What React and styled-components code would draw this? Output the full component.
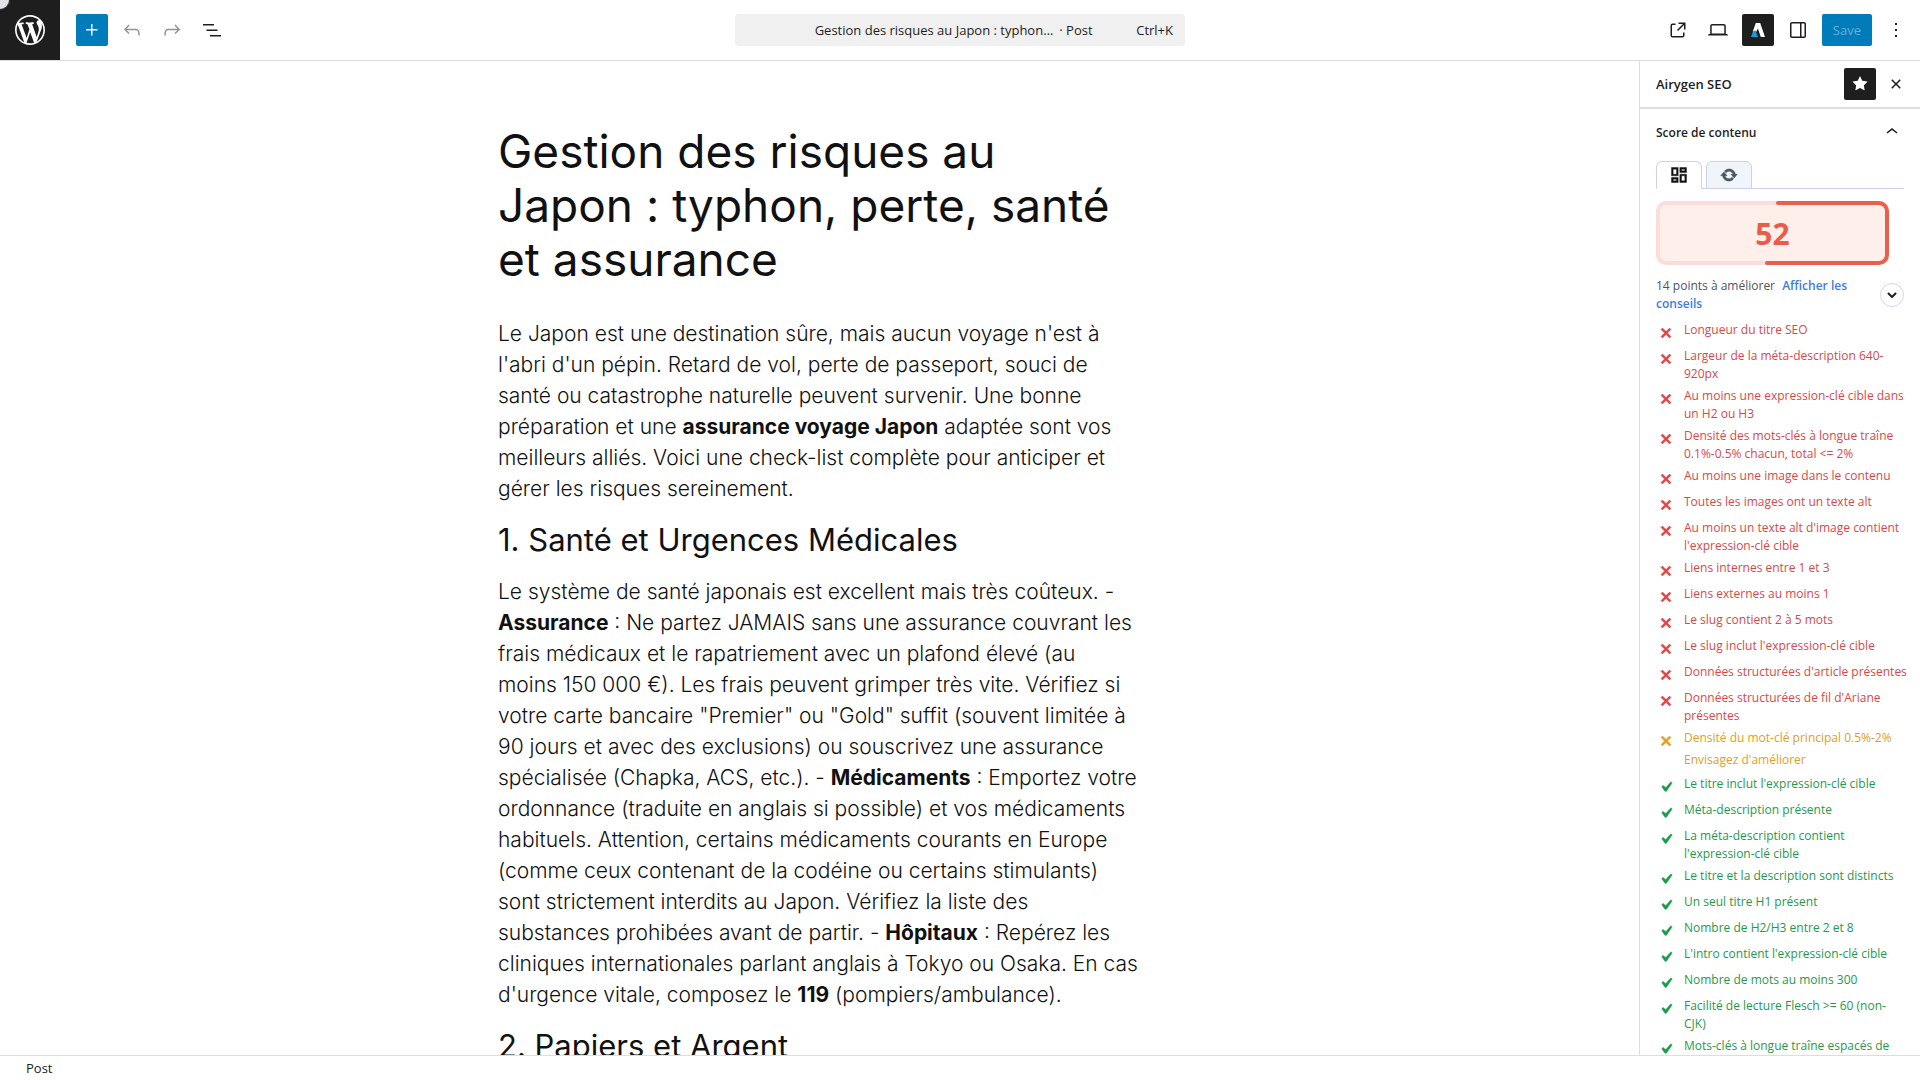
import React from "react";
import styled, { createGlobalStyle } from "styled-components";

const GlobalStyle = createGlobalStyle`
  *, *::before, *::after { box-sizing: border-box; }
  body {
    margin: 0;
    background: #fff;
    color: #1e1e1e;
    font-family: "Open Sans", "Noto Sans", sans-serif;
    font-size: 13px;
  }
  button { font: inherit; color: inherit; background: none; border: 0; padding: 0; cursor: pointer; }
  h1, h2, h3, p, ul { margin: 0; padding: 0; }
`;

const paths = {
  wordpress:
    "M20 10c0-5.51-4.49-10-10-10C4.48 0 0 4.49 0 10c0 5.52 4.48 10 10 10 5.51 0 10-4.48 10-10zM7.78 15.37L4.37 6.22c.55-.02 1.17-.08 1.17-.08.5-.06.44-1.13-.06-1.11 0 0-1.45.11-2.37.11-.18 0-.37 0-.58-.01C4.12 2.69 6.87 1.11 10 1.11c2.33 0 4.45.87 6.05 2.34-.68-.11-1.65.39-1.65 1.58 0 .74.45 1.36.9 2.1.35.61.55 1.36.55 2.46 0 1.49-1.4 5-1.4 5l-3.03-8.37c.54-.02.82-.17.82-.17.5-.05.44-1.25-.06-1.22 0 0-1.44.12-2.38.12-.87 0-2.33-.12-2.33-.12-.5-.03-.56 1.2-.06 1.22l.92.08 1.26 3.41zM17.41 10c.24-.64.74-1.87.43-4.25.7 1.29 1.05 2.71 1.05 4.25 0 3.29-1.73 6.24-4.4 7.78.97-2.59 1.94-5.2 2.92-7.78zM6.1 18.09C3.12 16.65 1.11 13.53 1.11 10c0-1.3.23-2.48.72-3.59C3.25 10.3 4.67 14.2 6.1 18.09zm4.03-6.63l2.58 6.98c-.86.29-1.76.45-2.71.45-.79 0-1.57-.11-2.29-.33.81-2.38 1.62-4.74 2.42-7.1z",
  plus: "M11 12.5V17.5H12.5V12.5H17.5V11H12.5V6H11V11H6V12.5H11Z",
  undo: "M18.3 11.7c-.6-.6-1.4-.9-2.3-.9H6.7l2.9-3.3-1.1-1-4.5 5L8.5 16l1-1-2.7-2.7H16c.5 0 .9.2 1.3.5 1 1 1 3.4 1 4.5v.3h1.5v-.2c0-1.5 0-4.3-1.5-5.7z",
  redo: "M15.6 6.5l-1.1 1 2.9 3.3H8c-.9 0-1.7.3-2.3.9-1.4 1.5-1.4 4.2-1.4 5.6v.2h1.5v-.3c0-1.1 0-3.5 1-4.5.3-.3.7-.5 1.3-.5h9.2L14.5 15l1.1 1.1 4.6-4.6-4.6-5z",
  listView: "M3 6h11v1.5H3V6Zm3.5 5.5h11V13h-11v-1.5ZM21 17H10v1.5h11V17Z",
  external:
    "M19.5 4.5h-7V6h4.44l-5.97 5.97 1.06 1.06L18 7.06v4.44h1.5v-7Zm-13 1a2 2 0 0 0-2 2v10a2 2 0 0 0 2 2h10a2 2 0 0 0 2-2v-3H17v3a.5.5 0 0 1-.5.5h-10a.5.5 0 0 1-.5-.5v-10a.5.5 0 0 1 .5-.5h3V5.5h-3Z",
  desktop:
    "M20.5 16h-.7V8c0-1.1-.9-2-2-2H6.2c-1.1 0-2 .9-2 2v8h-.7c-.8 0-1.5.7-1.5 1.5h20c0-.8-.7-1.5-1.5-1.5zM5.7 8c0-.3.2-.5.5-.5h11.6c.3 0 .5.2.5.5v7.6H5.7V8z",
  drawer:
    "M18 4H6c-1.1 0-2 .9-2 2v12c0 1.1.9 2 2 2h12c1.1 0 2-.9 2-2V6c0-1.1-.9-2-2-2zm-4 14.5H6c-.3 0-.5-.2-.5-.5V6c0-.3.2-.5.5-.5h8v13zm4.5-.5c0 .3-.2.5-.5.5h-2.5v-13H18c.3 0 .5.2.5.5v12z",
  more: "M13 19h-2v-2h2v2zm0-6h-2v-2h2v2zm0-6h-2V5h2v2z",
  close:
    "M12 13.06l3.712 3.713 1.061-1.06L13.061 12l3.712-3.712-1.06-1.06L12 10.938 8.288 7.227l-1.061 1.06L10.939 12l-3.712 3.712 1.06 1.061L12 13.061z",
  star: "M11.776 4.454a.25.25 0 01.448 0l2.069 4.192a.25.25 0 00.188.137l4.626.672a.25.25 0 01.139.426l-3.348 3.263a.25.25 0 00-.072.222l.79 4.607a.25.25 0 01-.362.263l-4.138-2.175a.25.25 0 00-.232 0l-4.138 2.175a.25.25 0 01-.363-.263l.79-4.607a.25.25 0 00-.071-.222L4.754 9.881a.25.25 0 01.139-.426l4.626-.672a.25.25 0 00.188-.137l2.069-4.192z",
  chevronUp: "M6.5 12.4L12 8l5.5 4.4-.9 1.2L12 10l-4.5 3.6-1-1.2z",
  dashboard:
    "M19 5v2h-4V5h4M9 5v6H5V5h4m10 8v6h-4v-6h4M9 17v2H5v-2h4M21 3h-8v6h8V3zM11 3H3v10h8V3zm10 8h-8v10h8V11zm-10 4H3v6h8v-6z",
  update:
    "M10.2 3.28c3.53 0 6.43 2.61 6.92 6h2.08l-3.5 4-3.5-4h2.32c-.45-1.97-2.21-3.45-4.32-3.45-1.45 0-2.73.71-3.54 1.78L4.95 5.66C6.23 4.2 8.11 3.28 10.2 3.28zm-.4 13.44c-3.52 0-6.43-2.61-6.92-6H.8l3.5-4c1.17 1.33 2.33 2.67 3.5 4H5.48c.45 1.97 2.21 3.45 4.32 3.45 1.45 0 2.73-.71 3.54-1.78l1.71 1.95c-1.28 1.46-3.15 2.38-5.25 2.38z",
  no: "M14.95 6.46L11.41 10l3.54 3.54-1.41 1.41L10 11.42l-3.53 3.53-1.42-1.42L8.58 10 5.05 6.47l1.42-1.42L10 8.58l3.54-3.53z",
  yes: "M14.83 4.89l1.34.94-5.81 8.38H9.02L5.78 9.67l1.34-1.25 2.57 2.4z",
};

const Icon = ({ name, size = 24, box = "0 0 24 24", weight = 0 }) => (
  <svg
    width={size}
    height={size}
    viewBox={box}
    fill="currentColor"
    stroke="currentColor"
    strokeWidth={weight}
    aria-hidden="true"
  >
    <path d={paths[name]} />
  </svg>
);

const Shell = styled.div`
  display: flex;
  flex-direction: column;
  height: 100vh;
  overflow: hidden;
`;

const Header = styled.header`
  display: grid;
  grid-template-columns: 1fr minmax(200px, 450px) 1fr;
  align-items: center;
  height: 61px;
  flex: none;
  border-bottom: 1px solid #ddd;
`;

const HeaderStart = styled.div`
  display: flex;
  align-items: center;
  gap: 8px;
`;

const HeaderEnd = styled.div`
  display: flex;
  align-items: center;
  justify-content: flex-end;
  gap: 8px;
  padding-right: 8px;
`;

const SiteLink = styled.a`
  position: relative;
  display: flex;
  align-items: center;
  justify-content: center;
  width: 60px;
  height: 60px;
  margin-right: 8px;
  background: #1e1e1e;
  color: #fff;
  overflow: hidden;
`;

const Corner = styled.span`
  position: absolute;
  top: 0;
  left: 0;
  width: 9px;
  height: 9px;
  background: #e2e2e4;
  border-bottom-right-radius: 9px;
  box-shadow: 0 0 0 1px #3a3650;
`;

const variants = {
  plain: "color: #1e1e1e;",
  muted: "color: #949494;",
  primary: "background: #007cba; color: #fff;",
  dark: "background: #1e1e1e; color: #fff;",
};

const IconButton = styled.button`
  display: flex;
  align-items: center;
  justify-content: center;
  width: 32px;
  height: 32px;
  border-radius: 2px;
  ${(p) => variants[p.$variant || "plain"]}
`;

const SaveButton = styled.button`
  height: 32px;
  padding: 0 11px;
  border-radius: 2px;
  background: #007cba;
  color: #66b0d6;
`;

const DocumentBar = styled.button`
  display: flex;
  align-items: center;
  height: 32px;
  padding: 0 12px 0 36px;
  border-radius: 4px;
  background: #f0f0f0;
  white-space: nowrap;
`;

const DocumentTitle = styled.span`
  flex: 1;
  text-align: center;
`;

const DocumentType = styled.span`
  margin-left: 6px;
`;

const Shortcut = styled.kbd`
  font: inherit;
`;

const Body = styled.div`
  display: flex;
  flex: 1;
  min-height: 0;
`;

const Canvas = styled.main`
  flex: 1;
  min-width: 0;
  overflow: hidden;
  padding: 63px 24px 0;
  font-family: Inter, "Liberation Sans", sans-serif;
  color: #111;
`;

const Article = styled.article`
  max-width: 643px;
  margin: 0 auto;
  white-space: nowrap;
`;

const Title = styled.h1`
  margin-bottom: 32px;
  font-size: 46px;
  font-weight: 400;
  line-height: 54px;
`;

const Heading = styled.h2`
  margin: 18px 0;
  font-size: 31px;
  font-weight: 400;
  line-height: 36px;
`;

const Paragraph = styled.p`
  font-size: 21px;
  font-weight: 300;
  line-height: 31px;
  b { font-weight: 700; }
`;

const Sidebar = styled.aside`
  flex: none;
  width: 281px;
  border-left: 1px solid #ddd;
  overflow: hidden;
`;

const SidebarHeader = styled.div`
  display: flex;
  align-items: center;
  gap: 4px;
  height: 48px;
  padding: 0 8px 0 16px;
  border-bottom: 2px solid #ddd;
`;

const SidebarTitle = styled.h2`
  flex: 1;
  font-size: 13px;
  font-weight: 600;
`;

const PanelTitle = styled.h3`
  font-size: 12px;
  font-weight: 600;
`;

const PanelToggle = styled.button`
  display: flex;
  align-items: center;
  justify-content: space-between;
  width: 100%;
  height: 46px;
  padding: 0 16px;
`;

const PanelBody = styled.div`
  padding: 6px 16px 0;
`;

const Tabs = styled.div`
  display: flex;
  gap: 4px;
  height: 28px;
  margin-bottom: 12px;
  border-bottom: 1px solid #cfcfec;
`;

const Tab = styled.button`
  display: flex;
  align-items: center;
  justify-content: center;
  width: 46px;
  height: 28px;
  border: 1px solid #cfcfec;
  border-bottom-color: ${(p) => (p.$active ? "#fff" : "#cfcfec")};
  border-radius: 6px 6px 0 0;
  background: ${(p) => (p.$active ? "#fff" : "#f0f5fb")};
  color: ${(p) => (p.$active ? "#111" : "#4b5563")};
`;

const ScoreBox = styled.div`
  display: grid;
  width: 233px;
  height: 64px;
  > * { grid-area: 1 / 1; }
`;

const ScoreValue = styled.strong`
  place-self: center;
  padding-top: 2px;
  color: #e85d4a;
  font-size: 30px;
  font-weight: 700;
  line-height: 32px;
`;

const Summary = styled.div`
  display: flex;
  align-items: center;
  justify-content: space-between;
  margin: 12px 0 8px;
  font-size: 12px;
  line-height: 18px;
  color: #4b5563;
`;

const SummaryText = styled.p`
  width: 200px;
`;

const TipsLink = styled.a`
  margin-left: 4px;
  color: #3b7ddd;
  font-weight: 600;
  text-decoration: none;
`;

const RoundButton = styled.button`
  display: flex;
  align-items: center;
  justify-content: center;
  flex: none;
  width: 24px;
  height: 24px;
  border: 1px solid #d3d3ee;
  border-radius: 50%;
`;

const Checks = styled.ul`
  display: flex;
  flex-direction: column;
  gap: 4px;
  margin-right: -4px;
  list-style: none;
`;

const tones = { bad: "#d94848", warn: "#e0a020", good: "#1d9a4c" };

const Check = styled.li`
  display: flex;
  gap: 8px;
  min-height: 22px;
  color: ${(p) => tones[p.$tone]};
  font-size: 12px;
  line-height: 18px;
  white-space: pre-line;
  svg { flex: none; margin-top: 2px; }
`;

const Note = styled.span`
  display: block;
  padding: 4px 0 2px;
`;

const Footer = styled.footer`
  display: flex;
  align-items: center;
  flex: none;
  height: 25px;
  padding: 0 26px;
  border-top: 1px solid #ddd;
`;

const checks = [
  ["bad", "Longueur du titre SEO"],
  ["bad", "Largeur de la méta-description 640-920px"],
  ["bad", "Au moins une expression-clé cible dans un H2 ou H3"],
  ["bad", "Densité des mots-clés à longue traîne 0.1%-0.5% chacun, total <= 2%"],
  ["bad", "Au moins une image dans le contenu"],
  ["bad", "Toutes les images ont un texte alt"],
  ["bad", "Au moins un texte alt d'image contient l'expression-clé cible"],
  ["bad", "Liens internes entre 1 et 3"],
  ["bad", "Liens externes au moins 1"],
  ["bad", "Le slug contient 2 à 5 mots"],
  ["bad", "Le slug inclut l'expression-clé cible"],
  ["bad", "Données structurées d'article présentes"],
  ["bad", "Données structurées de fil d'Ariane présentes"],
  ["warn", "Densité du mot-clé principal 0.5%-2%", "Envisagez d'améliorer"],
  ["good", "Le titre inclut l'expression-clé cible"],
  ["good", "Méta-description présente"],
  ["good", "La méta-description contient l'expression-clé cible"],
  ["good", "Le titre et la description sont distincts"],
  ["good", "Un seul titre H1 présent"],
  ["good", "Nombre de H2/H3 entre 2 et 8"],
  ["good", "L'intro contient l'expression-clé cible"],
  ["good", "Nombre de mots au moins 300"],
  ["good", "Facilité de lecture Flesch >= 60 (non-\nCJK)"],
  ["good", "Mots-clés à longue traîne espacés de"],
];

const AirygenMark = () => (
  <svg width="14" height="14" viewBox="0 0 14 14" aria-hidden="true">
    <path fill="#fff" d="M4.8 0h4.4L14 14H9.8L6.9 5.4 4.8 9.4 1.8 8.6z" />
    <path fill="#1b9ad6" d="M0 14l2-5.8 2.6-.6L7 14z" />
  </svg>
);

const ScoreRing = () => (
  <svg width="233" height="64" viewBox="0 0 233 64" fill="none" aria-hidden="true">
    <rect x="2" y="2" width="229" height="60" rx="8" fill="#ffefeb" stroke="#fbdedb" strokeWidth="4" />
    <path d="M122 2H223a8 8 0 0 1 8 8V54a8 8 0 0 1-8 8H111" stroke="#e8604c" strokeWidth="4" strokeLinecap="round" />
  </svg>
);

export default function App() {
  return (
    <Shell>
      <GlobalStyle />
      <Header>
        <HeaderStart>
          <SiteLink href="#" aria-label="WordPress">
            <Corner />
            <Icon name="wordpress" size={36} box="-2 -2 24 24" />
          </SiteLink>
          <IconButton $variant="primary" aria-label="Ajouter un bloc"><Icon name="plus" /></IconButton>
          <IconButton $variant="muted" aria-label="Annuler"><Icon name="undo" /></IconButton>
          <IconButton $variant="muted" aria-label="Rétablir"><Icon name="redo" /></IconButton>
          <IconButton aria-label="Vue en liste"><Icon name="listView" /></IconButton>
        </HeaderStart>
        <DocumentBar>
          <DocumentTitle>
            Gestion des risques au Japon : typhon…<DocumentType>· Post</DocumentType>
          </DocumentTitle>
          <Shortcut>Ctrl+K</Shortcut>
        </DocumentBar>
        <HeaderEnd>
          <IconButton aria-label="Voir l'article"><Icon name="external" /></IconButton>
          <IconButton aria-label="Aperçu"><Icon name="desktop" /></IconButton>
          <IconButton $variant="dark" aria-label="Airygen SEO"><AirygenMark /></IconButton>
          <IconButton aria-label="Réglages"><Icon name="drawer" /></IconButton>
          <SaveButton>Save</SaveButton>
          <IconButton aria-label="Options"><Icon name="more" /></IconButton>
        </HeaderEnd>
      </Header>

      <Body>
        <Canvas>
          <Article>
            <Title>
              Gestion des risques au<br />
              Japon : typhon, perte, santé<br />
              et assurance
            </Title>
            <Paragraph>
              Le Japon est une destination sûre, mais aucun voyage n'est à<br />
              l'abri d'un pépin. Retard de vol, perte de passeport, souci de<br />
              santé ou catastrophe naturelle peuvent survenir. Une bonne<br />
              préparation et une <b>assurance voyage Japon</b> adaptée sont vos<br />
              meilleurs alliés. Voici une check-list complète pour anticiper et<br />
              gérer les risques sereinement.
            </Paragraph>
            <Heading>1. Santé et Urgences Médicales</Heading>
            <Paragraph>
              Le système de santé japonais est excellent mais très coûteux. -<br />
              <b>Assurance</b> : Ne partez JAMAIS sans une assurance couvrant les<br />
              frais médicaux et le rapatriement avec un plafond élevé (au<br />
              moins 150 000 €). Les frais peuvent grimper très vite. Vérifiez si<br />
              votre carte bancaire "Premier" ou "Gold" suffit (souvent limitée à<br />
              90 jours et avec des exclusions) ou souscrivez une assurance<br />
              spécialisée (Chapka, ACS, etc.). - <b>Médicaments</b> : Emportez votre<br />
              ordonnance (traduite en anglais si possible) et vos médicaments<br />
              habituels. Attention, certains médicaments courants en Europe<br />
              (comme ceux contenant de la codéine ou certains stimulants)<br />
              sont strictement interdits au Japon. Vérifiez la liste des<br />
              substances prohibées avant de partir. - <b>Hôpitaux</b> : Repérez les<br />
              cliniques internationales parlant anglais à Tokyo ou Osaka. En cas<br />
              d'urgence vitale, composez le <b>119</b> (pompiers/ambulance).
            </Paragraph>
            <Heading>2. Papiers et Argent</Heading>
          </Article>
        </Canvas>

        <Sidebar>
          <SidebarHeader>
            <SidebarTitle>Airygen SEO</SidebarTitle>
            <IconButton $variant="dark" aria-label="Épingler"><Icon name="star" /></IconButton>
            <IconButton aria-label="Fermer"><Icon name="close" /></IconButton>
          </SidebarHeader>
          <PanelToggle aria-expanded="true">
            <PanelTitle>Score de contenu</PanelTitle>
            <Icon name="chevronUp" />
          </PanelToggle>
          <PanelBody>
            <Tabs role="tablist">
              <Tab role="tab" $active aria-selected="true" aria-label="Tableau de bord">
                <Icon name="dashboard" size={20} weight={0.5} />
              </Tab>
              <Tab role="tab" aria-selected="false" aria-label="Actualiser">
                <Icon name="update" size={18} box="0 0 20 20" weight={0.6} />
              </Tab>
            </Tabs>
            <ScoreBox>
              <ScoreRing />
              <ScoreValue>52</ScoreValue>
            </ScoreBox>
            <Summary>
              <SummaryText>
                14 points à améliorer <TipsLink href="#">Afficher les conseils</TipsLink>
              </SummaryText>
              <RoundButton aria-label="Déplier">
                <svg width="10" height="6" viewBox="0 0 10 6" fill="none" stroke="#1e1e1e" strokeWidth="2" aria-hidden="true">
                  <path d="M1 1l4 4 4-4" />
                </svg>
              </RoundButton>
            </Summary>
            <Checks>
              {checks.map(([tone, label, note]) => (
                <Check key={label} $tone={tone}>
                  <Icon name={tone === "good" ? "yes" : "no"} size={20} box="0 0 20 20" weight={0.6} />
                  <div>
                    {label}
                    {note && <Note>{note}</Note>}
                  </div>
                </Check>
              ))}
            </Checks>
          </PanelBody>
        </Sidebar>
      </Body>

      <Footer>Post</Footer>
    </Shell>
  );
}
